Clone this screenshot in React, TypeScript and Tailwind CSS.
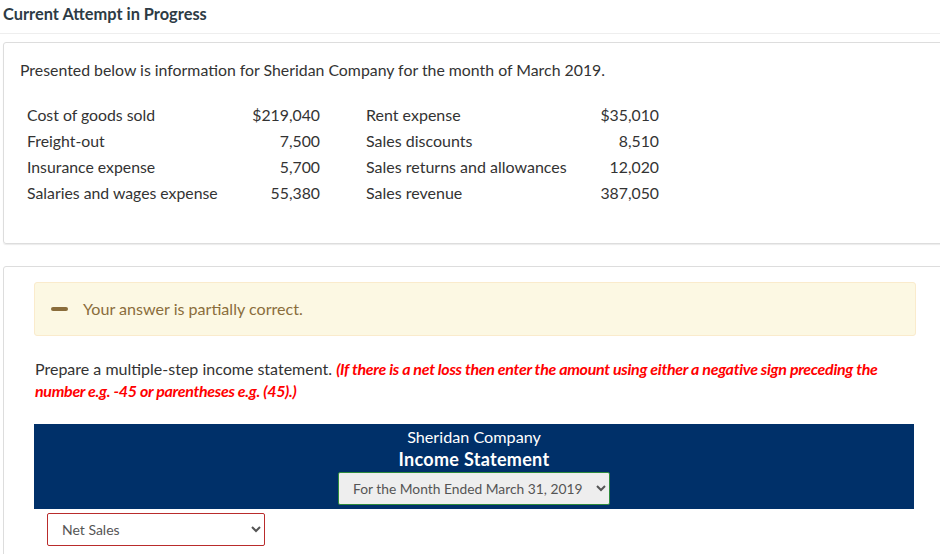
const rows = [
  ["Cost of goods sold", "$219,040", "Rent expense", "$35,010"],
  ["Freight-out", "7,500", "Sales discounts", "8,510"],
  ["Insurance expense", "5,700", "Sales returns and allowances", "12,020"],
  ["Salaries and wages expense", "55,380", "Sales revenue", "387,050"],
];

export default function App() {
  return (
    <div className="h-[554px] w-[940px] overflow-hidden bg-white font-['Lato',sans-serif] text-[15.8px] text-[#333]">
      {/* Heading */}
      <div className="h-[34px] border-b border-[#eeeeee] pl-[3px] pt-[3px]">
        <h1 className="text-[16.4px] font-bold leading-[22px] text-[#2d3b45]">Current Attempt in Progress</h1>
      </div>

      {/* Question card */}
      <div className="ml-[3px] mt-2 h-[202px] w-[960px] rounded-[3px] border border-[#dddddd] pl-4 pt-[15px] shadow-[0_1px_1px_rgba(0,0,0,0.08)]">
        <p className="text-[15.85px] leading-[24px] text-[#333]">
          Presented below is information for Sheridan Company for the month of March 2019.
        </p>
        <table className="mt-[20px] ml-[7px] border-collapse">
          <tbody>
            {rows.map((r) => (
              <tr key={r[0]} className="h-[26px]">
                <td className="w-[225px] p-0">{r[0]}</td>
                <td className="w-[68px] p-0 text-right">{r[1]}</td>
                <td className="w-[46px] p-0"></td>
                <td className="w-[225px] p-0 text-[16px]">{r[2]}</td>
                <td className="w-[68px] p-0 text-right">{r[3]}</td>
              </tr>
            ))}
          </tbody>
        </table>
      </div>

      {/* Answer card */}
      <div className="ml-[3px] mt-[22px] h-[300px] w-[960px] rounded-[3px] border border-[#dddddd] pl-[30px] pt-[15px]">
        <div className="flex h-[54px] w-[882px] items-center rounded-[3px] border border-[#faebcc] bg-[#fcf8e3] pl-4">
          <div className="h-[4px] w-[17px] rounded-full bg-[#8a6d3b]"></div>
          <span className="ml-[15px] text-[16.1px] text-[#8a6d3b]">Your answer is partially correct.</span>
        </div>

        <p className="mt-[22px] ml-px w-[870px] text-[16px] leading-[22px] text-[#333]">
          Prepare a multiple-step income statement.{" "}
          <b className="font-bold italic tracking-[-0.31px] text-[#ff0000]">
            (If there is a net loss then enter the amount using either a negative sign preceding the number e.g. -45 or parentheses e.g. (45).)
          </b>
        </p>

        {/* Statement header */}
        <div className="mt-[22px] flex h-[85px] w-[880px] flex-col items-center bg-[#003069] pt-[2px] text-white">
          <div className="text-[16.2px] leading-[22px]">Sheridan Company</div>
          <div className="text-[18px] font-bold leading-[22px] tracking-[0.3px]">Income Statement</div>
          <select className="mt-[2px] h-[33px] w-[272px] rounded-[2px] border border-[#2e8b3d] bg-[#eeeeee] pl-[10px] text-[13.8px] text-[#555]">
            <option>For the Month Ended March 31, 2019</option>
          </select>
        </div>

        <select className="ml-[13px] mt-[4px] h-[33px] w-[218px] rounded-[2px] border border-[#b92c2c] bg-white pl-[10px] text-[14px] text-[#555]">
          <option>Net Sales</option>
        </select>
      </div>
    </div>
  );
}
